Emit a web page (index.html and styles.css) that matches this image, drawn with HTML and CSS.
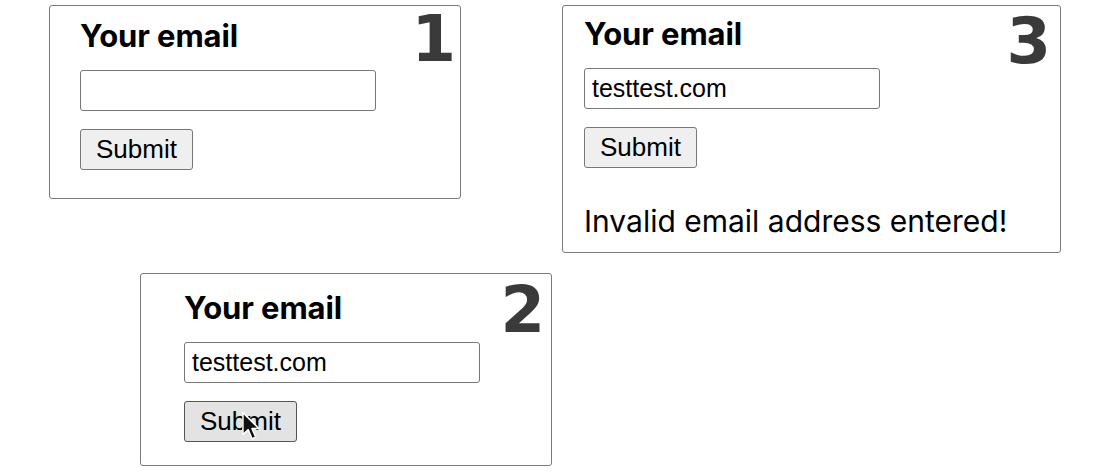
FILE: index.html
```html
<!DOCTYPE html>
<html lang="en">
<head>
  <meta charset="UTF-8" />
  <title>Email form states</title>
  <link rel="stylesheet" href="styles.css">
</head>
<body>
  <div class="sheet">
    <div class="row row-top">
      <!-- State 1: empty -->
      <div class="card card-one">
        <span class="step-num">1</span>
        <h3 class="card-title">Your email</h3>
        <input class="email-input" type="text" value="" />
        <div><button class="submit-btn">Submit</button></div>
      </div>

      <!-- State 3: error shown -->
      <div class="card card-three">
        <span class="step-num">3</span>
        <h3 class="card-title">Your email</h3>
        <input class="email-input" type="text" value="testtest.com" />
        <div><button class="submit-btn">Submit</button></div>
        <p class="error-msg">Invalid email address entered!</p>
      </div>
    </div>

    <div class="row row-bottom">
      <!-- State 2: clicking submit -->
      <div class="card card-two">
        <span class="step-num">2</span>
        <h3 class="card-title">Your email</h3>
        <input class="email-input" type="text" value="testtest.com" />
        <div><button class="submit-btn pressed">Submit</button></div>
        <svg class="pointer" width="22" height="32" viewBox="0 0 20 30">
          <path d="M1.5 1.5 L1.5 22 L6.5 17.5 L10 26 L13.5 24.5 L10 16.5 L16.5 16.5 Z" fill="#111" stroke="#fff" stroke-width="1.4" stroke-linejoin="round"/>
        </svg>
      </div>
    </div>
  </div>
</body>
</html>
```

FILE: styles.css
```css
body {
  margin: 0;
  background: #fff;
  font-family: "Liberation Sans", Arial, sans-serif;
  color: #000;
}

.sheet {
  padding-top: 5px;
}

.row {
  display: flex;
  align-items: flex-start;
}

.row-top {
  padding-left: 49px;
  gap: 101px;
}

.row-bottom {
  padding-left: 140px;
  margin-top: 20px;
}

.card {
  position: relative;
  box-sizing: border-box;
  border: 1px solid #7a7a7a;
  border-radius: 3px;
  display: flex;
  flex-direction: column;
  align-items: flex-start;
}

.card-one {
  width: 412px;
  height: 194px;
  padding: 12px 0 0 30px;
}

.card-two {
  width: 412px;
  height: 193px;
  padding: 16px 0 0 43px;
}

.card-three {
  width: 499px;
  height: 248px;
  padding: 10px 0 0 21px;
}

.card-title {
  margin: 0 0 16px;
  font-family: Inter, "Liberation Sans", sans-serif;
  font-weight: 700;
  font-size: 31px;
  line-height: 36px;
  letter-spacing: -0.1px;
}

.step-num {
  position: absolute;
  top: 0;
  right: 4px;
  font-family: "DejaVu Sans", Verdana, sans-serif;
  font-weight: 700;
  font-size: 64px;
  line-height: 66px;
  color: #3a3a3a;
}

.card-three .step-num {
  right: 9px;
  top: 2px;
}

.card-two .step-num {
  right: 6px;
  top: 3px;
}

.email-input {
  box-sizing: border-box;
  width: 296px;
  height: 41px;
  margin: 0 0 18px;
  padding: 0 7px;
  border: 1px solid #777;
  border-radius: 3px;
  font-family: "Liberation Sans", Arial, sans-serif;
  font-size: 25px;
  color: #000;
}

.submit-btn {
  box-sizing: border-box;
  width: 113px;
  height: 41px;
  padding: 0;
  border: 1px solid #777;
  border-radius: 3px;
  background: #efefef;
  font-family: "Liberation Sans", Arial, sans-serif;
  font-size: 26px;
  color: #000;
}

.submit-btn.pressed {
  background: #e3e3e3;
  border-color: #555;
}

.error-msg {
  margin: 35px 0 0;
  font-family: Inter, "Liberation Sans", sans-serif;
  font-size: 30px;
  line-height: 36px;
}

.pointer {
  position: absolute;
  left: 100px;
  top: 137px;
}
```
